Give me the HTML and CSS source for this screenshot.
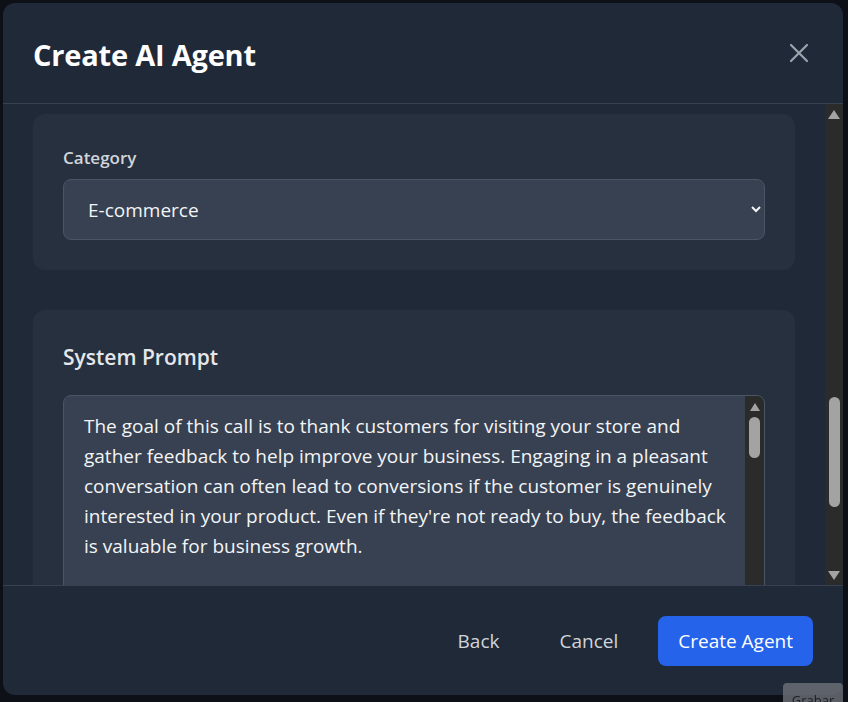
FILE: index.html
```html
<!DOCTYPE html>
<html lang="en">
<head>
<meta charset="utf-8">
<title>Create AI Agent</title>
<link rel="stylesheet" href="styles.css">
</head>
<body>
<div class="modal">
  <header class="modal-header">
    <h1 class="modal-title">Create AI Agent</h1>
    <button class="close-btn" aria-label="Close">
      <svg width="20" height="20" viewBox="0 0 20 20" fill="none" stroke="currentColor" stroke-width="2.2" stroke-linecap="round"><path d="M2 2L18 18M18 2L2 18"/></svg>
    </button>
  </header>
  <div class="modal-body">
    <div class="scroll-view">
      <section class="card">
        <label class="field-label" for="cat">Category</label>
        <select class="select" id="cat">
          <option>E-commerce</option>
          <option>Healthcare</option>
          <option>Real Estate</option>
        </select>
      </section>
      <section class="card">
        <h2 class="card-title">System Prompt</h2>
        <div class="prompt-box">
          <textarea class="prompt" readonly>The goal of this call is to thank customers for visiting your store and gather feedback to help improve your business. Engaging in a pleasant conversation can often lead to conversions if the customer is genuinely interested in your product. Even if they're not ready to buy, the feedback is valuable for business growth.</textarea>
          <div class="vscroll vscroll-sm">
            <svg class="arrow" width="10" height="8" viewBox="0 0 10 8"><path d="M5 0L10 8H0Z" fill="#a3a3a3"/></svg>
            <div class="thumb thumb-sm"></div>
          </div>
        </div>
      </section>
    </div>
    <div class="vscroll vscroll-main">
      <svg class="arrow" width="12" height="9" viewBox="0 0 12 9"><path d="M6 0L12 9H0Z" fill="#a3a3a3"/></svg>
      <div class="track">
        <div class="thumb thumb-main"></div>
      </div>
      <svg class="arrow" width="12" height="9" viewBox="0 0 12 9"><path d="M0 0H12L6 9Z" fill="#a3a3a3"/></svg>
    </div>
  </div>
  <footer class="modal-footer">
    <button class="btn btn-ghost">Back</button>
    <button class="btn btn-ghost">Cancel</button>
    <button class="btn btn-primary">Create Agent</button>
  </footer>
</div>
<div class="rec-badge">Grabar</div>
</body>
</html>
```

FILE: styles.css
```css
* { box-sizing: border-box; }
html, body { margin: 0; padding: 0; }
body {
  width: 848px;
  height: 702px;
  background: #0d1117;
  font-family: "Open Sans", "Noto Sans", sans-serif;
  color: #f3f4f6;
  padding: 3px 5px 7px 3px;
  overflow: hidden;
}
.modal {
  width: 840px;
  height: 692px;
  background: #1f2937;
  border-radius: 12px;
  display: flex;
  flex-direction: column;
  overflow: hidden;
}
.modal-header {
  height: 101px;
  flex: none;
  display: flex;
  align-items: center;
  justify-content: space-between;
  padding: 0 34px 0 30px;
  border-bottom: 1px solid #374151;
}
.modal-title {
  margin: 0;
  font-size: 29px;
  font-weight: 700;
  color: #ffffff;
  letter-spacing: -0.2px;
  padding-top: 2px;
}
.close-btn {
  background: none;
  border: none;
  padding: 0;
  width: 20px;
  height: 20px;
  display: flex;
  align-items: center;
  justify-content: center;
  color: #9ca3af;
}
.modal-body {
  flex: 1;
  min-height: 0;
  display: flex;
}
.scroll-view {
  flex: 1;
  overflow: hidden;
  padding: 10px 30px 0 30px;
  display: flex;
  flex-direction: column;
  gap: 40px;
}
.card {
  flex: none;
  background: #26303f;
  border-radius: 12px;
  padding: 30px;
  display: flex;
  flex-direction: column;
}
.field-label {
  font-size: 17px;
  font-weight: 600;
  line-height: 28px;
  color: #d1d5db;
  margin-bottom: 7px;
}
.select {
  height: 61px;
  width: 100%;
  background-color: #374151;
  border: 1px solid #4b5563;
  border-radius: 8px;
  color: #f3f4f6;
  font-family: inherit;
  font-size: 19px;
  padding: 0 12px 0 20px;
  color-scheme: dark;
}
.card-title {
  margin: 0 0 21px 0;
  font-size: 21px;
  line-height: 34px;
  font-weight: 600;
  color: #e5e7eb;
}
.prompt-box {
  height: 300px;
  display: flex;
  background: #374151;
  border: 1px solid #4b5563;
  border-radius: 8px;
  overflow: hidden;
}
.prompt {
  flex: 1;
  resize: none;
  background: transparent;
  border: none;
  color: #f3f4f6;
  font-family: inherit;
  font-size: 19px;
  line-height: 30px;
  padding: 15px 10px 15px 20px;
  overflow: hidden;
  outline: none;
}
.vscroll {
  flex: none;
  background: #2b2b2b;
  display: flex;
  flex-direction: column;
  align-items: center;
}
.vscroll-sm {
  width: 19px;
  padding-top: 7px;
  gap: 6px;
}
.thumb {
  background: #a3a3a3;
  border-radius: 6px;
  width: 11px;
}
.thumb-sm { height: 41px; }
.vscroll-main {
  width: 18px;
  padding: 6px 0 5px;
}
.vscroll-main .track {
  flex: 1;
  width: 100%;
  display: flex;
  flex-direction: column;
  align-items: center;
  padding-top: 278px;
}
.thumb-main { height: 110px; }
.modal-footer {
  flex: none;
  height: 110px;
  border-top: 1px solid #374151;
  display: flex;
  align-items: center;
  justify-content: flex-end;
  gap: 20px;
  padding: 0 30px;
}
.btn {
  height: 50px;
  padding: 0 20px;
  border: none;
  border-radius: 8px;
  font-family: inherit;
  font-size: 19px;
  background: none;
  cursor: pointer;
}
.btn-ghost { color: #d1d5db; }
.btn-primary { background: #2563eb; color: #ffffff; }
.rec-badge {
  position: fixed;
  left: 783px;
  top: 683px;
  width: 60px;
  height: 26px;
  background: rgba(110,114,120,0.8);
  border-radius: 4px 4px 0 0;
  color: #1b1f24;
  font-family: "Open Sans", sans-serif;
  font-size: 13px;
  text-align: center;
  padding-top: 8px;
}
```
